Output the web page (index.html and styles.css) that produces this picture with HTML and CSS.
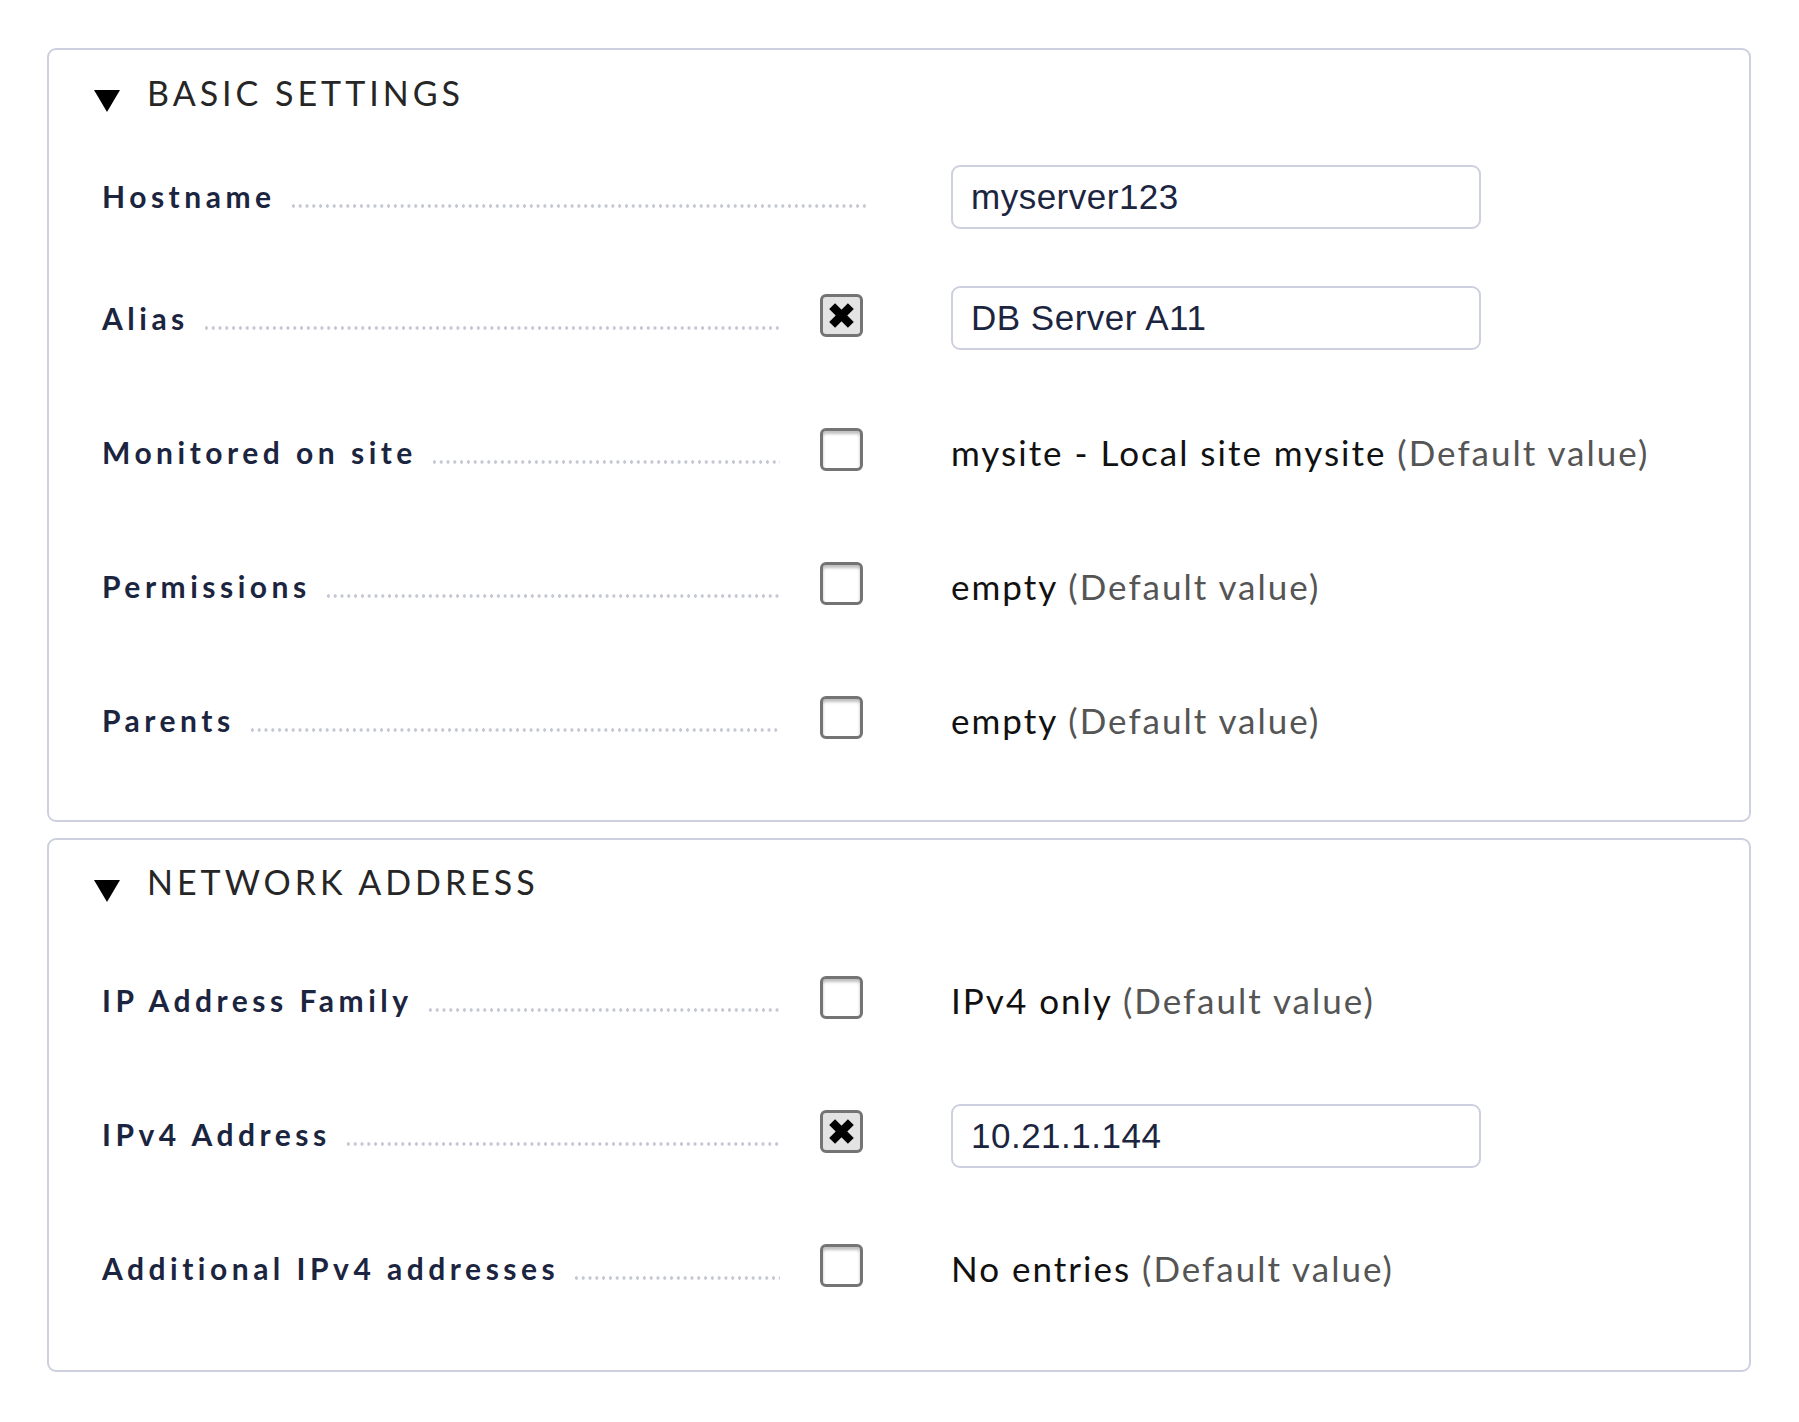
FILE: index.html
```html
<!DOCTYPE html>
<html>
<head>
<meta charset="utf-8">
<link rel="stylesheet" href="styles.css">
</head>
<body>
<div class="page">
  <section class="box box-basic">
    <div class="box-head"><span class="tri"></span><span class="title">Basic settings</span></div>
    <div class="row row-input row-first">
      <div class="label label-wide"><span class="ltext">Hostname</span><span class="dots"></span></div>
      <div class="value"><div class="input">myserver123</div></div>
    </div>
    <div class="row">
      <div class="label"><span class="ltext">Alias</span><span class="dots"></span></div>
      <div class="cb cb-on"><svg viewBox="0 0 26 26" width="27" height="27"><path d="M4 4 L22 22 M22 4 L4 22" stroke="#000" stroke-width="8" stroke-linecap="butt"/></svg></div>
      <div class="value"><div class="input">DB Server A11</div></div>
    </div>
    <div class="row">
      <div class="label"><span class="ltext">Monitored on site</span><span class="dots"></span></div>
      <div class="cb"></div>
      <div class="value text">mysite - Local site mysite <span class="def">(Default value)</span></div>
    </div>
    <div class="row">
      <div class="label"><span class="ltext">Permissions</span><span class="dots"></span></div>
      <div class="cb"></div>
      <div class="value text">empty <span class="def">(Default value)</span></div>
    </div>
    <div class="row">
      <div class="label"><span class="ltext">Parents</span><span class="dots"></span></div>
      <div class="cb"></div>
      <div class="value text">empty <span class="def">(Default value)</span></div>
    </div>
  </section>
  <section class="box box-net">
    <div class="box-head"><span class="tri"></span><span class="title">Network address</span></div>
    <div class="row">
      <div class="label"><span class="ltext">IP Address Family</span><span class="dots"></span></div>
      <div class="cb"></div>
      <div class="value text">IPv4 only <span class="def">(Default value)</span></div>
    </div>
    <div class="row row-ip">
      <div class="label"><span class="ltext">IPv4 Address</span><span class="dots"></span></div>
      <div class="cb cb-on"><svg viewBox="0 0 26 26" width="27" height="27"><path d="M4 4 L22 22 M22 4 L4 22" stroke="#000" stroke-width="8" stroke-linecap="butt"/></svg></div>
      <div class="value"><div class="input">10.21.1.144</div></div>
    </div>
    <div class="row">
      <div class="label"><span class="ltext">Additional IPv4 addresses</span><span class="dots"></span></div>
      <div class="cb"></div>
      <div class="value text">No entries <span class="def">(Default value)</span></div>
    </div>
  </section>
</div>
</body>
</html>
```
FILE: styles.css
```css
html, body {
  margin: 0;
  padding: 0;
  background: #fff;
}
body {
  font-family: Lato, "Noto Sans", sans-serif;
}
.page {
  padding: 48px 48px 0 47px;
  display: flex;
  flex-direction: column;
  gap: 16px;
  width: 1704px;
}
.box {
  border: 2px solid #cdd0de;
  border-radius: 9px;
  padding: 0 0 33px 0;
  display: flex;
  flex-direction: column;
}
.box-net {
  padding-bottom: 35px;
}
.box-head {
  display: flex;
  align-items: center;
  height: 90px;
  padding-left: 45px;
  box-sizing: border-box;
}
.box-basic .box-head {
  padding-bottom: 6px;
}
.box-net .box-head {
  height: 93px;
  padding-bottom: 10px;
}
.tri {
  width: 0;
  height: 0;
  border-left: 13px solid transparent;
  border-right: 13px solid transparent;
  border-top: 22px solid #000;
  margin-top: 18px;
  margin-right: 27px;
}
.title {
  font-size: 34px;
  text-transform: uppercase;
  letter-spacing: 4px;
  color: #262626;
}
.row {
  display: grid;
  grid-template-columns: 678px 43px 1fr;
  column-gap: 40px;
  align-items: center;
  height: 134px;
  padding-left: 53px;
}
.row-first {
  height: 111px;
}
.row .value {
  margin-left: 48px;
}
.row-input .label-wide {
  grid-column: 1 / 3;
  margin-right: -6px;
}
.row-input .value {
  grid-column: 3;
}
.row-first .input {
  margin-top: 3px;
}
.row-ip .input {
  margin-top: 4px;
}
.label {
  display: flex;
  align-items: baseline;
}
.ltext {
  font-weight: 700;
  font-size: 30px;
  letter-spacing: 4.5px;
  color: #1c2540;
  white-space: nowrap;
}
.dots {
  flex: 1;
  height: 4px;
  margin-left: 14px;
  background-image: radial-gradient(circle, #c5c8d4 1.5px, transparent 1.9px);
  background-size: 6.8px 4px;
  background-repeat: repeat-x;
}
.cb {
  width: 43px;
  height: 43px;
  box-sizing: border-box;
  border: 3px solid #747474;
  border-radius: 6px;
  background: #fff;
  box-shadow: inset 0 3px 3px rgba(0,0,0,0.25);
  display: flex;
  align-items: center;
  justify-content: center;
  margin-top: -6px;
}
.cb-on {
  background: #e3e3e3;
  box-shadow: none;
}
.input {
  width: 530px;
  height: 64px;
  box-sizing: border-box;
  border: 2px solid #cdd0de;
  border-radius: 9px;
  padding-left: 18px;
  display: flex;
  align-items: center;
  font-family: "Liberation Sans", Arial, sans-serif;
  font-size: 35px;
  letter-spacing: 0.5px;
  color: #1c2540;
}
.text {
  font-size: 35px;
  letter-spacing: 2px;
  color: #111;
  white-space: nowrap;
}
.def {
  color: #555;
}
```
